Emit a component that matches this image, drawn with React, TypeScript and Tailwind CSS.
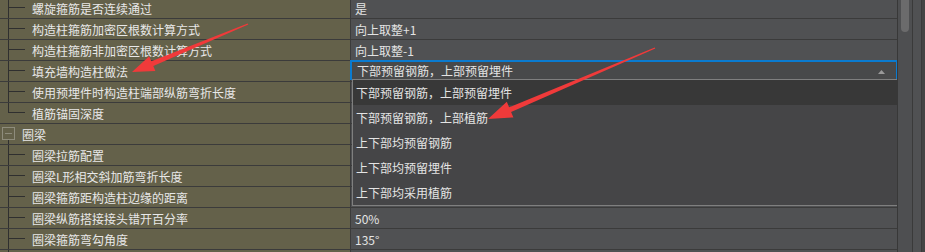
import React from "react";

type Row = { label: string; value: string; kind: "child" | "last" | "group" };

const rows: Row[] = [
  { label: "螺旋箍筋是否连续通过", value: "是", kind: "child" },
  { label: "构造柱箍筋加密区根数计算方式", value: "向上取整+1", kind: "child" },
  { label: "构造柱箍筋非加密区根数计算方式", value: "向上取整-1", kind: "child" },
  { label: "填充墙构造柱做法", value: "", kind: "child" },
  { label: "使用预埋件时构造柱端部纵筋弯折长度", value: "", kind: "child" },
  { label: "植筋锚固深度", value: "", kind: "last" },
  { label: "圈梁", value: "", kind: "group" },
  { label: "圈梁拉筋配置", value: "", kind: "child" },
  { label: "圈梁L形相交斜加筋弯折长度", value: "", kind: "child" },
  { label: "圈梁箍筋距构造柱边缘的距离", value: "", kind: "child" },
  { label: "圈梁纵筋搭接接头错开百分率", value: "50%", kind: "child" },
  { label: "圈梁箍筋弯勾角度", value: "135°", kind: "child" },
  { label: "", value: "", kind: "child" },
];

const options = [
  "下部预留钢筋，上部预留埋件",
  "下部预留钢筋，上部植筋",
  "上下部均预留钢筋",
  "上下部均预留埋件",
  "上下部均采用植筋",
];

const font = { fontFamily: '"Noto Sans CJK SC", "Microsoft YaHei", sans-serif' };

function TreeGlyph({ kind }: { kind: Row["kind"] }) {
  if (kind === "group") {
    return (
      <svg width="22" height="20" className="block shrink-0">
        <rect x="2.5" y="3.5" width="12" height="12" fill="none" stroke="#8e8c7c" />
        <line x1="5" y1="9.5" x2="12" y2="9.5" stroke="#8e8c7c" />
        <line x1="8.5" y1="16" x2="8.5" y2="20" stroke="#2f2f2f" />
      </svg>
    );
  }
  return (
    <svg width="32" height="20" className="block shrink-0">
      <line x1="8.5" y1="0" x2="8.5" y2={kind === "last" ? 10 : 20} stroke="#2f2f2f" />
      <line x1="8" y1="9.5" x2="25" y2="9.5" stroke="#2f2f2f" />
    </svg>
  );
}

export default function App() {
  return (
    <div className="flex h-[252px] w-[925px] overflow-hidden bg-[#454545] text-[12px]" style={font}>
      <div className="relative h-[252px] w-[898px] shrink-0 overflow-hidden border-r border-[#383838]">
        <div className="-mt-[2px] flex flex-col">
          {rows.map((r, i) => (
            <div key={i} className="flex h-[21px] shrink-0 border-b border-[#3b3b3b]">
              <div className="flex w-[351px] shrink-0 items-start border-r border-[#3b3b3b] bg-[#64614a]">
                <TreeGlyph kind={r.kind} />
                <span className="whitespace-nowrap pt-[1px] leading-[20px] text-[#e8e8e8]">{r.label}</span>
              </div>
              <div className="flex-1 whitespace-nowrap bg-[#505153] pl-[4px] pt-[1px] leading-[20px] text-[#e4e4e4]">
                {r.value}
              </div>
            </div>
          ))}
        </div>

        {/* in-place editor */}
        <div className="absolute left-[350px] top-[60px] flex h-[20px] w-[548px] items-start justify-between border-x-2 border-t-2 border-[#0a7bd0] bg-[#48494a] pl-[5px] pr-[11px]">
          <span className="whitespace-nowrap leading-[18px] text-[#e4e4e4]">{options[0]}</span>
          <svg width="7" height="4" className="mt-[8px] block">
            <polygon points="0,4 3.5,0 7,4" fill="#9a9a9a" />
          </svg>
        </div>

        {/* dropdown list */}
        <div className="absolute left-[352px] top-[79px] flex h-[127px] w-[546px] flex-col border border-[#7f7f7f] bg-[#454547]">
          {options.map((o, i) => (
            <div
              key={o}
              className={`h-[25px] shrink-0 whitespace-nowrap pl-[3px] pt-[1px] leading-[24px] text-[#e4e4e4] ${
                i === 0 ? "bg-[#383838]" : ""
              }`}
            >
              {o}
            </div>
          ))}
        </div>

        {/* red annotation arrows */}
        <svg width="898" height="252" className="pointer-events-none absolute left-0 top-0">
          <polygon
            points="247.7,23.4 151.3,61.3 149.2,56.2 132,72 155.4,71.0 153.3,65.9 248.3,24.6"
            fill="#f03a3a"
          />
          <polygon
            points="654.7,47.4 509.1,107.3 506.8,101.8 488,119 513.4,117.4 511.1,111.9 655.3,48.6"
            fill="#f03a3a"
          />
        </svg>
      </div>

      {/* scrollbar */}
      <div className="relative h-[252px] w-[14px] shrink-0 bg-[#4e4f51]">
        <div className="absolute left-[3px] top-[-10px] h-[42px] w-[8px] rounded-[4px] bg-[#6b6b6c]" />
      </div>
      <div className="h-[252px] w-[10px] shrink-0 border-x border-[#3a3a3a] bg-[#505153]" />
      <div className="h-[252px] flex-1 bg-[#444444]" />
    </div>
  );
}
